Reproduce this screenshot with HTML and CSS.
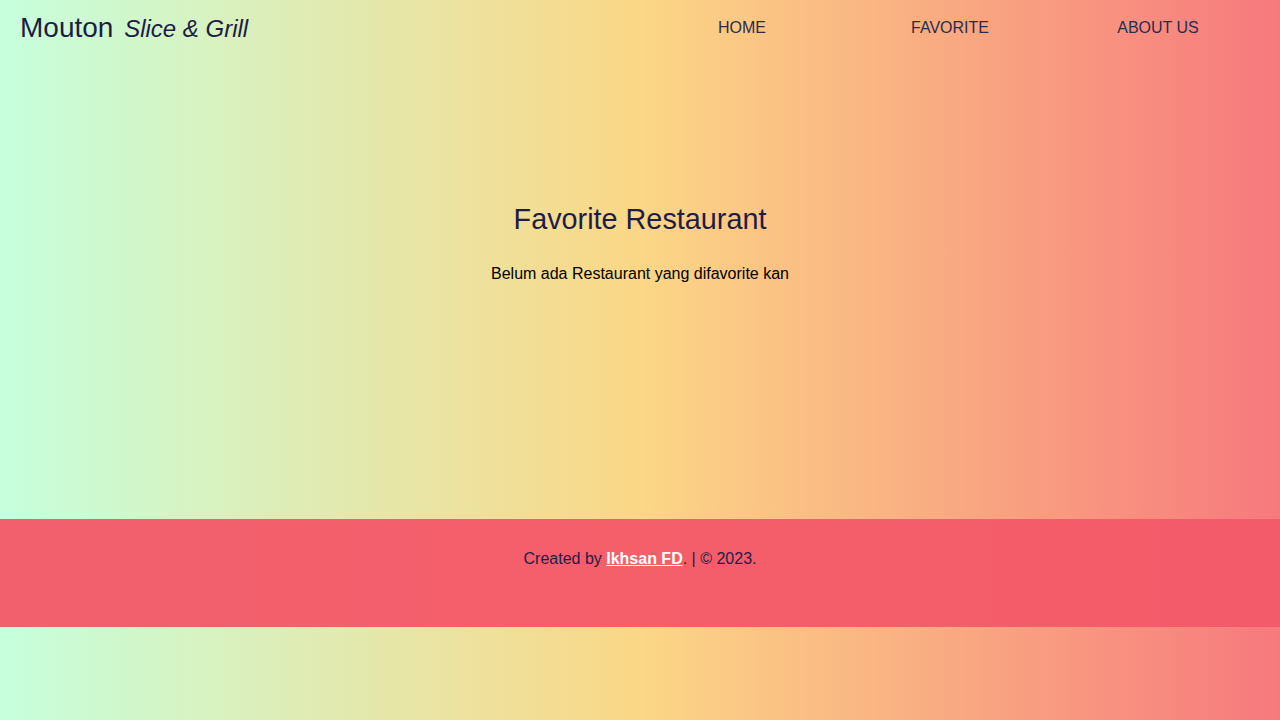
FILE: index.html
```html
<!DOCTYPE html>
<html lang="id">
<head>
<meta charset="utf-8">
<title>Mouton Slice &amp; Grill</title>
<link rel="stylesheet" href="styles.css">
</head>
<body>
  <header class="app-bar">
    <h1 class="brand">Mouton <span class="brand-sub">Slice &amp; Grill</span></h1>
    <nav class="nav">
      <a class="nav-link" href="#">HOME</a>
      <a class="nav-link" href="#">FAVORITE</a>
      <a class="nav-link" href="#">ABOUT US</a>
    </nav>
  </header>
  <main class="content">
    <h2 class="content-title">Favorite Restaurant</h2>
    <p class="content-empty">Belum ada Restaurant yang difavorite kan</p>
  </main>
  <footer class="footer">
    <p class="footer-text">Created by <a class="footer-link" href="#">Ikhsan FD</a>. | © 2023.</p>
  </footer>
</body>
</html>
```
FILE: styles.css
```css
html, body {
  margin: 0;
  padding: 0;
}

body {
  min-height: 100vh;
  font-family: "Liberation Sans", Arial, sans-serif;
  background: linear-gradient(to right, #c6ffdd, #fbd786, #f7797d);
  color: #1f1d45;
}

.app-bar {
  display: flex;
  align-items: center;
  height: 56px;
  padding: 0 18px 0 20px;
}

.brand {
  flex: 1;
  margin: 0;
  font-size: 28px;
  font-weight: 400;
  color: #1f1d45;
  line-height: 1;
}

.brand-sub {
  margin-left: 3px;
  font-size: 24px;
  font-style: italic;
}

.nav {
  display: flex;
  width: 624px;
}

.nav-link {
  flex: 1;
  text-align: center;
  font-size: 16px;
  color: #2c2a50;
  text-decoration: none;
}

.content {
  height: 463px;
  box-sizing: border-box;
  padding-top: 147px;
  text-align: center;
}

.content-title {
  margin: 0 0 29px;
  font-size: 28.8px;
  font-weight: 400;
  color: #1f1d45;
}

.content-empty {
  margin: 0;
  font-size: 16px;
  color: #000;
}

.footer {
  height: 108px;
  box-sizing: border-box;
  padding-top: 31px;
  background: rgba(244, 89, 105, 0.96);
  text-align: center;
}

.footer-text {
  margin: 0;
  font-size: 16px;
  line-height: 18px;
  color: #1f1d45;
}

.footer-link {
  color: #fff;
  font-weight: 700;
  text-decoration: underline;
}
```
